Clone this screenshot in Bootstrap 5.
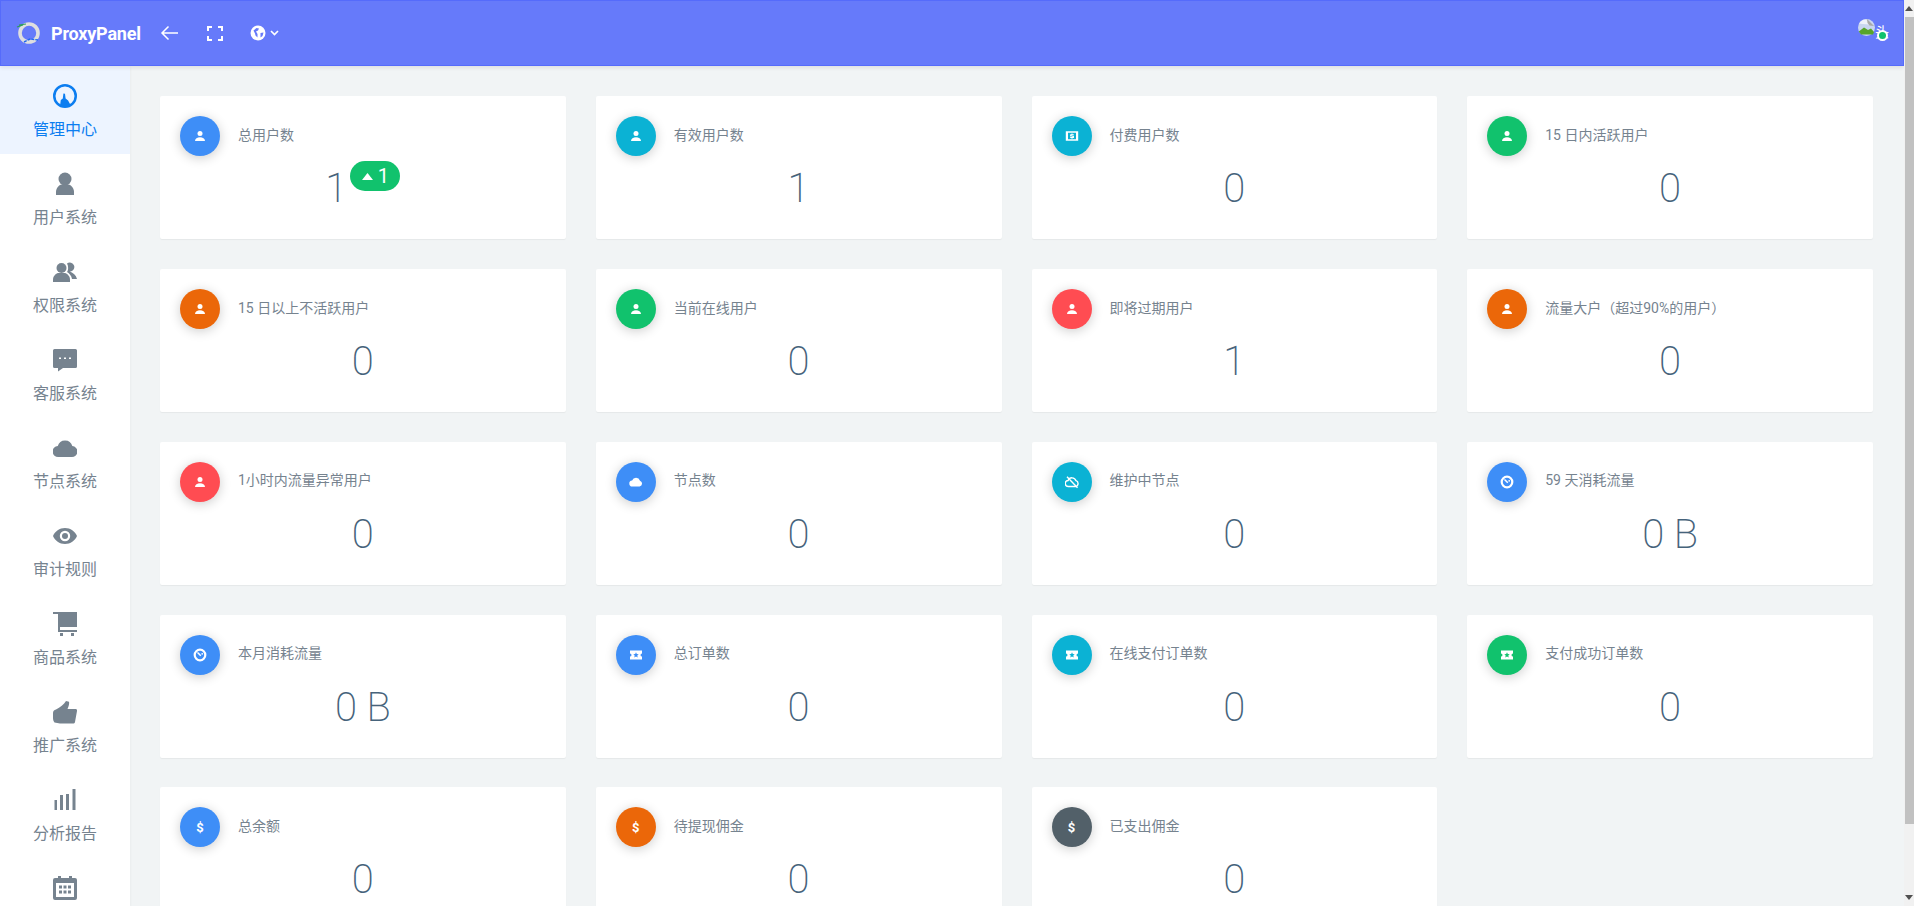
<!DOCTYPE html>
<html lang="zh-CN">
<head>
<meta charset="utf-8">
<title>ProxyPanel</title>
<link href="https://cdn.jsdelivr.net/npm/bootstrap@5.3.0/dist/css/bootstrap.min.css" rel="stylesheet">
<style>
html,body{height:906px;overflow:hidden}
body{background:#f1f4f5;color:#76838f;font-family:Roboto,"Noto Sans CJK SC",sans-serif;font-size:14px}
.app-col{width:1904px;height:906px;overflow:hidden}
.app-head{flex:none;height:66px;padding:0;background:#667afa;border:1px solid #556bfb;box-shadow:0 2px 4px rgba(0,0,0,.08);position:relative;z-index:2;flex-wrap:nowrap}
.brand-logo{margin-left:15px;width:26px;height:26px}
.brand-name{margin-left:9px;width:92px;font-size:18px;font-weight:700;color:#fff;letter-spacing:-.2px;white-space:nowrap}
.head-tool{color:#fff;margin-left:17px;display:flex}
.head-tool.t2{margin-left:28px}
.head-tool.t3{margin-left:27px}
.avatar-wrap{position:relative;width:30px;height:30px;margin-right:15px;margin-top:-1px}
.avatar-clip{width:30px;height:30px;color:#fff;font-size:14px;line-height:18px;white-space:nowrap;display:flex;align-items:flex-start;padding-top:1px}
.avatar-clip svg{flex:none}
.avatar-dot{position:absolute;right:0;bottom:7px;width:11px;height:11px;border:2px solid #fff;border-radius:50%;background:#11c26d}
.side-col{width:130px;flex:none;background:#fff;box-shadow:0 1px 3px rgba(0,0,0,.06);overflow:hidden;position:relative;z-index:1}
.side-item{flex:none;height:88px;padding-top:18px;color:#76838f;text-decoration:none;font-size:16px;font-weight:400;line-height:24px}
.side-item svg{width:24px;height:24px;margin-bottom:10px;fill:currentColor;display:block}
.side-item.on{background:#edf4ff;color:#0c7df0;font-weight:400}
.main-pane{padding:30.3px 31px 0 30px;overflow:hidden}
.stat-row{--bs-gutter-x:30px;--bs-gutter-y:0}
.stat-card{height:143px;margin-bottom:29.75px;border:0;border-radius:2px;padding:20px;background:#fff;box-shadow:0 1px 1px rgba(0,0,0,.05)}
.stat-ico{width:40px;height:40px;flex:none;color:#fff;box-shadow:0 2px 12px rgba(0,0,0,.2);font-size:13px;font-weight:700}
.stat-ico svg{width:14px;height:14px;fill:currentColor}
.stat-name{margin-left:18px;padding-bottom:2px;font-size:14px;font-weight:400;color:#76838f}
.stat-num{font-size:40px;line-height:46px;font-weight:200;color:#46637b;margin-top:10px}
.up-pill{width:50px;height:30px;border-radius:15px;background:#11c26d;color:#fff;font-size:20px;font-weight:400;line-height:30px;margin-left:3px;margin-top:-26px;gap:5px}
.ic-blue{background:#3e8ef7}.ic-cyan{background:#0bb2d4}.ic-green{background:#11c26d}
.ic-orange{background:#eb6709}.ic-red{background:#ff4c52}.ic-dark{background:#526069}
.fake-bar{width:10px;flex:none;height:906px;background:#f1f1f1}
.bar-cap{height:17px;flex:none}
.bar-thumb{height:807px;margin-left:1px;flex:none;background:#c1c1c1}
.bar-rest{flex:1}
</style>
</head>
<body class="d-flex">
<svg width="0" height="0" class="d-none">
<defs>
<symbol id="i-person" viewBox="0 0 14 14"><circle cx="7" cy="4.400" r="2.500"/><path d="M2 12c.2-2.600 2.200-3.700 5-3.700s4.800 1.100 5 3.700z"/></symbol>
<symbol id="i-cash" viewBox="0 0 14 14"><path fill-rule="evenodd" d="M.8 2.300h12.400v9.400H.8zM3 3.800v6.400h8V3.800z"/><path d="M6.500 4.500h1v.7h1.300v1H6.600v.5h1.800c.4 0 .6.300.6.600v1.100c0 .4-.2.600-.6.600h-.9v.7h-1v-.7H5.200v-1h2.200v-.5H5.700c-.4 0-.6-.300-.6-.600V5.800c0-.3.200-.600.600-.600h.8z"/></symbol>
<symbol id="i-cloud" viewBox="0 0 14 14"><path d="M3.500 11.500a3 3 0 0 1-.4-6A4.200 4.200 0 0 1 11 5.700a3 3 0 0 1-.4 5.800z"/></symbol>
<symbol id="i-cloudoff" viewBox="0 0 14 14"><path d="M3.500 11.500a3 3 0 0 1-.4-6A4.200 4.200 0 0 1 11 5.700a3 3 0 0 1-.4 5.800z" fill="none" stroke="currentColor" stroke-width="1.400"/><path d="M2 1.800l10.500 11" stroke="currentColor" stroke-width="1.400"/></symbol>
<symbol id="i-gauge" viewBox="0 0 14 14"><circle cx="7" cy="7" r="5.300" fill="none" stroke="currentColor" stroke-width="2.200"/><path d="M4.500 4.500L7.800 7.800" stroke="currentColor" stroke-width="1.500"/><circle cx="9.200" cy="5.800" r=".9"/></symbol>
<symbol id="i-ticket" viewBox="0 0 14 14"><path fill-rule="evenodd" d="M1 2.500h12v3a1.500 1.500 0 0 0 0 3v3H1v-3a1.500 1.500 0 0 0 0-3zM7 4.300l.8 1.800 1.900.2-1.400 1.200.4 1.900L7 8.500l-1.700.9.400-1.900-1.400-1.200 1.900-.2z"/></symbol>
</defs>
</svg>
<div class="app-col d-flex flex-column">
  <nav class="navbar app-head">
    <div class="d-flex align-items-center">
      <svg class="brand-logo" viewBox="0 0 26 26"><circle cx="13" cy="13" r="9" fill="none" stroke="#dfdfdf" stroke-width="3.600"/><path d="M1 7l6-2M3 5l7-1" stroke="#2e9d5b" stroke-width="1.200" fill="none"/><path d="M8 22l6-3 8 1" stroke="#2468ee" stroke-width="1.400" fill="none" stroke-dasharray="3 1"/></svg>
      <span class="brand-name">ProxyPanel</span>
      <span class="head-tool"><svg width="19" height="16" viewBox="0 0 19 16" fill="none" stroke="#fff" stroke-width="1.500"><path d="M18 8H2M8.500 1.500L2 8l6.500 6.500"/></svg></span>
      <span class="head-tool t2"><svg width="16" height="15" viewBox="0 0 16 15" fill="none" stroke="#fff" stroke-width="2"><path d="M1 5V1h4M11 1h4v4M15 10v4h-4M5 14H1v-4"/></svg></span>
      <span class="head-tool t3 align-items-center gap-1"><svg width="16" height="16" viewBox="0 0 16 16"><circle cx="8" cy="8" r="7.500" fill="#fff"/><path d="M3.500 5.500l3-2.500 2.500.5-1 2-2 1 1.500 2.500 0 3.500-2-2-.5-2zM10.500 8l3-.5-1 3.500-2 1.500z" fill="#667afa"/></svg><svg width="9" height="6" viewBox="0 0 9 6" fill="none" stroke="#fff" stroke-width="1.700"><path d="M1 1l3.500 3.500L8 1"/></svg></span>
    </div>
    <div class="avatar-wrap">
      <div class="avatar-clip"><svg width="17" height="17" viewBox="0 0 17 17"><circle cx="8.500" cy="8.500" r="8.500" fill="#c9d6f0"/><path d="M1 4.500a8.500 8.500 0 0 1 7-4L14 6c-3-1-8-.5-13-1.500z" fill="#eef2fb"/><path d="M0.800 12.500L6 8.500l4 2.500 3-1.500 3 3.500-1 2.500H3z" fill="#57a52a"/><path d="M9 0l7 7-4.500-.5L9.500 4z" fill="#a9a9a9"/></svg><span class="mt-1">头</span></div>
      <span class="avatar-dot"></span>
    </div>
  </nav>
  <div class="d-flex flex-grow-1 overflow-hidden">
    <div class="side-col nav flex-column flex-nowrap">
      <a class="side-item on d-flex flex-column align-items-center" href="#"><svg viewBox="0 0 24 24"><path fill-rule="evenodd" d="M12 0a12 12 0 1 0 0 24 12 12 0 0 0 0-24zM12 2.500a9.500 9.500 0 1 1 0 19 9.500 9.500 0 0 1 0-19z"/><path d="M7 22l.8-6 2-1.500.6-5 1.600.3.600 4.700 2.500 2 3 5.500z"/></svg>管理中心</a>
      <a class="side-item d-flex flex-column align-items-center" href="#"><svg viewBox="0 0 24 24"><circle cx="12" cy="7" r="6.500"/><path d="M3 23v-3c0-4 3-7 5.500-7.500h7C18 13 21 16 21 20v3z"/></svg>用户系统</a>
      <a class="side-item d-flex flex-column align-items-center" href="#"><svg viewBox="0 0 24 24"><circle cx="8.500" cy="8" r="5"/><path d="M0 22v-2.500C0 16 3 13.500 5 13h7c2 .5 5 3 5 6.500V22z"/><path d="M14 3.500a4.500 4.500 0 1 1 3 8c3 1.500 6 3.500 7 7.500h-5c-.5-3-2.500-5.500-5-7 1.500-2 1.500-6 0-8.500z"/></svg>权限系统</a>
      <a class="side-item d-flex flex-column align-items-center" href="#"><svg viewBox="0 0 24 24"><path fill-rule="evenodd" d="M1.500 1h21A1.500 1.500 0 0 1 24 2.500v16a1.500 1.500 0 0 1-1.500 1.500H10l-5 3.500V20H1.500A1.500 1.500 0 0 1 0 18.500v-16A1.500 1.500 0 0 1 1.500 1zM6 9.500V11h2V9.500zM11 9.500V11h2V9.500zM16 9.500V11h2V9.500z"/></svg>客服系统</a>
      <a class="side-item d-flex flex-column align-items-center" href="#"><svg viewBox="0 0 24 24"><path d="M5.500 21A5.500 5.500 0 0 1 4.800 10 7.500 7.500 0 0 1 19.300 10a5.500 5.500 0 0 1-.8 11z"/></svg>节点系统</a>
      <a class="side-item d-flex flex-column align-items-center" href="#"><svg viewBox="0 0 24 24"><path fill-rule="evenodd" d="M12 4c5.500 0 10 3.500 12 8-2 4.500-6.500 8-12 8S2 16.500 0 12c2-4.500 6.500-8 12-8zM12 6.800a5.200 5.200 0 1 0 0 10.400 5.200 5.200 0 0 0 0-10.400z"/><circle cx="12" cy="12" r="3"/></svg>审计规则</a>
      <a class="side-item d-flex flex-column align-items-center" href="#"><svg viewBox="0 0 24 24"><path d="M0 0h24v15H7v3h17v2H5V2H0z"/><path d="M7 21h3v3H7zM18 21h3v3h-3z"/></svg>商品系统</a>
      <a class="side-item d-flex flex-column align-items-center" href="#"><svg viewBox="0 0 24 24"><path d="M13 1l3 .8c.5 2-.5 5-1.500 7.200h8c1.200 0 1.700 1 1.500 2l-2 11c-.2 1-1 1.500-2 1.500H7l-5.500-1C.5 21 0 20 0 18v-5c0-2 1-3 3-3.500C7 7.500 11 4.500 13 1z"/></svg>推广系统</a>
      <a class="side-item d-flex flex-column align-items-center" href="#"><svg viewBox="0 0 24 24"><path d="M1.500 12h2.500v10H1.500zM7 7h3v15H7zM13 6h3v16h-3zM19.500 1h3v21h-3z"/></svg>分析报告</a>
      <a class="side-item d-flex flex-column align-items-center" href="#"><svg viewBox="0 0 24 24"><path fill-rule="evenodd" d="M2 2h3V0h3v2h8V0h3v2h3a2 2 0 0 1 2 2v18a2 2 0 0 1-2 2H2a2 2 0 0 1-2-2V4a2 2 0 0 1 2-2zM3 7v14h18V7zM6 9.500h3v3H6zM10.500 9.500h3v3h-3zM15 9.500h3v3h-3zM6 14.500h3v3H6zM10.500 14.500h3v3h-3zM15 14.500h3v3h-3z"/></svg></a>
    </div>
    <main class="main-pane flex-grow-1">
      <div class="row stat-row">
        <div class="col-3"><div class="card stat-card"><div class="d-flex align-items-center"><span class="stat-ico ic-blue rounded-circle d-flex align-items-center justify-content-center"><svg><use href="#i-person"/></svg></span><span class="stat-name">总用户数</span></div><div class="stat-num d-flex justify-content-center align-items-center">1<span class="up-pill d-inline-flex align-items-center justify-content-center"><svg width="11" height="7" viewBox="0 0 11 7" fill="#fff"><path d="M5.500 0L11 7H0z"/></svg>1</span></div></div></div>
        <div class="col-3"><div class="card stat-card"><div class="d-flex align-items-center"><span class="stat-ico ic-cyan rounded-circle d-flex align-items-center justify-content-center"><svg><use href="#i-person"/></svg></span><span class="stat-name">有效用户数</span></div><div class="stat-num text-center">1</div></div></div>
        <div class="col-3"><div class="card stat-card"><div class="d-flex align-items-center"><span class="stat-ico ic-cyan rounded-circle d-flex align-items-center justify-content-center"><svg><use href="#i-cash"/></svg></span><span class="stat-name">付费用户数</span></div><div class="stat-num text-center">0</div></div></div>
        <div class="col-3"><div class="card stat-card"><div class="d-flex align-items-center"><span class="stat-ico ic-green rounded-circle d-flex align-items-center justify-content-center"><svg><use href="#i-person"/></svg></span><span class="stat-name">15 日内活跃用户</span></div><div class="stat-num text-center">0</div></div></div>

        <div class="col-3"><div class="card stat-card"><div class="d-flex align-items-center"><span class="stat-ico ic-orange rounded-circle d-flex align-items-center justify-content-center"><svg><use href="#i-person"/></svg></span><span class="stat-name">15 日以上不活跃用户</span></div><div class="stat-num text-center">0</div></div></div>
        <div class="col-3"><div class="card stat-card"><div class="d-flex align-items-center"><span class="stat-ico ic-green rounded-circle d-flex align-items-center justify-content-center"><svg><use href="#i-person"/></svg></span><span class="stat-name">当前在线用户</span></div><div class="stat-num text-center">0</div></div></div>
        <div class="col-3"><div class="card stat-card"><div class="d-flex align-items-center"><span class="stat-ico ic-red rounded-circle d-flex align-items-center justify-content-center"><svg><use href="#i-person"/></svg></span><span class="stat-name">即将过期用户</span></div><div class="stat-num text-center">1</div></div></div>
        <div class="col-3"><div class="card stat-card"><div class="d-flex align-items-center"><span class="stat-ico ic-orange rounded-circle d-flex align-items-center justify-content-center"><svg><use href="#i-person"/></svg></span><span class="stat-name">流量大户（超过90%的用户）</span></div><div class="stat-num text-center">0</div></div></div>

        <div class="col-3"><div class="card stat-card"><div class="d-flex align-items-center"><span class="stat-ico ic-red rounded-circle d-flex align-items-center justify-content-center"><svg><use href="#i-person"/></svg></span><span class="stat-name">1小时内流量异常用户</span></div><div class="stat-num text-center">0</div></div></div>
        <div class="col-3"><div class="card stat-card"><div class="d-flex align-items-center"><span class="stat-ico ic-blue rounded-circle d-flex align-items-center justify-content-center"><svg><use href="#i-cloud"/></svg></span><span class="stat-name">节点数</span></div><div class="stat-num text-center">0</div></div></div>
        <div class="col-3"><div class="card stat-card"><div class="d-flex align-items-center"><span class="stat-ico ic-cyan rounded-circle d-flex align-items-center justify-content-center"><svg><use href="#i-cloudoff"/></svg></span><span class="stat-name">维护中节点</span></div><div class="stat-num text-center">0</div></div></div>
        <div class="col-3"><div class="card stat-card"><div class="d-flex align-items-center"><span class="stat-ico ic-blue rounded-circle d-flex align-items-center justify-content-center"><svg><use href="#i-gauge"/></svg></span><span class="stat-name">59 天消耗流量</span></div><div class="stat-num text-center">0 B</div></div></div>

        <div class="col-3"><div class="card stat-card"><div class="d-flex align-items-center"><span class="stat-ico ic-blue rounded-circle d-flex align-items-center justify-content-center"><svg><use href="#i-gauge"/></svg></span><span class="stat-name">本月消耗流量</span></div><div class="stat-num text-center">0 B</div></div></div>
        <div class="col-3"><div class="card stat-card"><div class="d-flex align-items-center"><span class="stat-ico ic-blue rounded-circle d-flex align-items-center justify-content-center"><svg><use href="#i-ticket"/></svg></span><span class="stat-name">总订单数</span></div><div class="stat-num text-center">0</div></div></div>
        <div class="col-3"><div class="card stat-card"><div class="d-flex align-items-center"><span class="stat-ico ic-cyan rounded-circle d-flex align-items-center justify-content-center"><svg><use href="#i-ticket"/></svg></span><span class="stat-name">在线支付订单数</span></div><div class="stat-num text-center">0</div></div></div>
        <div class="col-3"><div class="card stat-card"><div class="d-flex align-items-center"><span class="stat-ico ic-green rounded-circle d-flex align-items-center justify-content-center"><svg><use href="#i-ticket"/></svg></span><span class="stat-name">支付成功订单数</span></div><div class="stat-num text-center">0</div></div></div>

        <div class="col-3"><div class="card stat-card"><div class="d-flex align-items-center"><span class="stat-ico ic-blue rounded-circle d-flex align-items-center justify-content-center">$</span><span class="stat-name">总余额</span></div><div class="stat-num text-center">0</div></div></div>
        <div class="col-3"><div class="card stat-card"><div class="d-flex align-items-center"><span class="stat-ico ic-orange rounded-circle d-flex align-items-center justify-content-center">$</span><span class="stat-name">待提现佣金</span></div><div class="stat-num text-center">0</div></div></div>
        <div class="col-3"><div class="card stat-card"><div class="d-flex align-items-center"><span class="stat-ico ic-dark rounded-circle d-flex align-items-center justify-content-center">$</span><span class="stat-name">已支出佣金</span></div><div class="stat-num text-center">0</div></div></div>
      </div>
    </main>
  </div>
</div>
<div class="fake-bar d-flex flex-column">
  <div class="bar-cap d-flex align-items-center justify-content-center"><svg width="8" height="5" viewBox="0 0 8 5" fill="#505050"><path d="M4 0l4 5H0z"/></svg></div>
  <div class="bar-thumb"></div>
  <div class="bar-rest"></div>
  <div class="bar-cap d-flex align-items-center justify-content-center"><svg width="8" height="5" viewBox="0 0 8 5" fill="#505050"><path d="M0 0h8L4 5z"/></svg></div>
</div>
</body>
</html>
